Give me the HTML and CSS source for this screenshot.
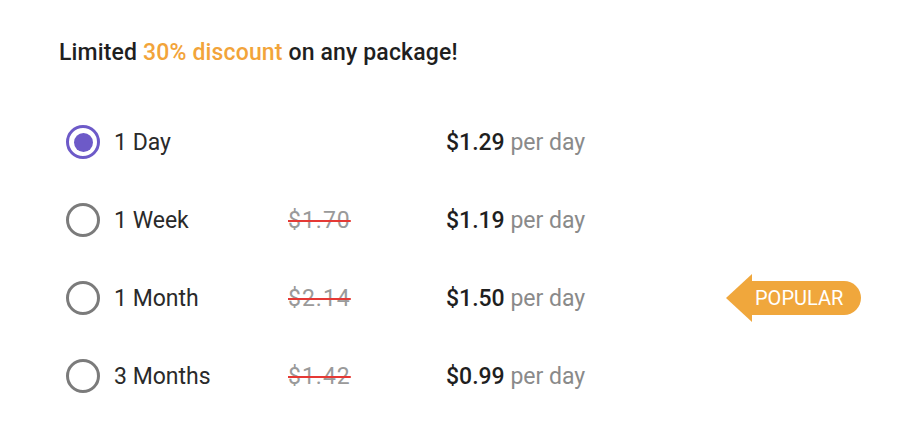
FILE: index.html
```html
<!DOCTYPE html>
<html lang="en">
<head>
    <meta charset="UTF-8">
    <meta name="viewport" content="width=device-width, initial-scale=1.0">
    <title>Packages</title>
    <link rel="stylesheet" href="styles.css">
</head>
<body>
    <section class="offer">
        <h1 class="offer-title">Limited <span class="highlight">30% discount</span> on any package!</h1>

        <form class="plans">
            <label class="plan">
                <span class="plan-name">
                    <input type="radio" name="plan" value="day" checked>
                    <span class="radio"></span>
                    1 Day
                </span>
                <span class="old-price"></span>
                <span class="price"><b>$1.29</b> per day</span>
                <span></span>
            </label>

            <label class="plan">
                <span class="plan-name">
                    <input type="radio" name="plan" value="week">
                    <span class="radio"></span>
                    1 Week
                </span>
                <span class="old-price">$1.70</span>
                <span class="price"><b>$1.19</b> per day</span>
                <span></span>
            </label>

            <label class="plan">
                <span class="plan-name">
                    <input type="radio" name="plan" value="month">
                    <span class="radio"></span>
                    1 Month
                </span>
                <span class="old-price">$2.14</span>
                <span class="price"><b>$1.50</b> per day</span>
                <span class="badge">Popular</span>
            </label>

            <label class="plan">
                <span class="plan-name">
                    <input type="radio" name="plan" value="3months">
                    <span class="radio"></span>
                    3 Months
                </span>
                <span class="old-price">$1.42</span>
                <span class="price"><b>$0.99</b> per day</span>
                <span></span>
            </label>
        </form>
    </section>
</body>
</html>
```

FILE: styles.css
```css
body {
    font-family: Roboto, "Liberation Sans", sans-serif;
    margin: 0;
    padding: 0;
    background: #fff;
    color: #222;
}

.offer {
    padding: 39px 0 0 59px;
}

.offer-title {
    font-size: 23px;
    font-weight: 500;
    letter-spacing: 0.15px;
    line-height: 27px;
    margin: 0 0 37px;
    color: #1f1f1f;
}

.highlight {
    color: #f2a43a;
}

.plans {
    display: flex;
    flex-direction: column;
    padding-left: 7px;
}

.plan {
    display: grid;
    grid-template-columns: 222px 158px 280px auto;
    align-items: center;
    height: 78px;
    font-size: 23px;
    cursor: pointer;
}

.plan-name {
    display: flex;
    align-items: center;
    gap: 14px;
    color: #2a2a2a;
}

.plan input {
    display: none;
}

.radio {
    width: 28px;
    height: 28px;
    border: 3px solid #7b7b7b;
    border-radius: 50%;
    display: flex;
    align-items: center;
    justify-content: center;
}

.plan input:checked + .radio {
    border-color: #6d5ac8;
}

.plan input:checked + .radio::after {
    content: "";
    width: 19px;
    height: 19px;
    border-radius: 50%;
    background: #6d5ac8;
}

.old-price {
    color: #9a9a9a;
    letter-spacing: 1px;
    text-decoration: line-through;
    text-decoration-color: #e53935;
    text-decoration-thickness: 2px;
}

.price {
    color: #8a8a8a;
}

.price b {
    color: #1f1f1f;
    font-weight: 500;
}

.badge {
    position: relative;
    justify-self: start;
    margin-left: 26px;
    background: #f0a73c;
    color: #fff;
    font-size: 20px;
    text-transform: uppercase;
    line-height: 34px;
    padding: 0 18px 0 3px;
    border-radius: 0 17px 17px 0;
}

.badge::before {
    content: "";
    position: absolute;
    left: -26px;
    top: -7px;
    border-style: solid;
    border-width: 24px 26px 24px 0;
    border-color: transparent #f0a73c transparent transparent;
}
```
